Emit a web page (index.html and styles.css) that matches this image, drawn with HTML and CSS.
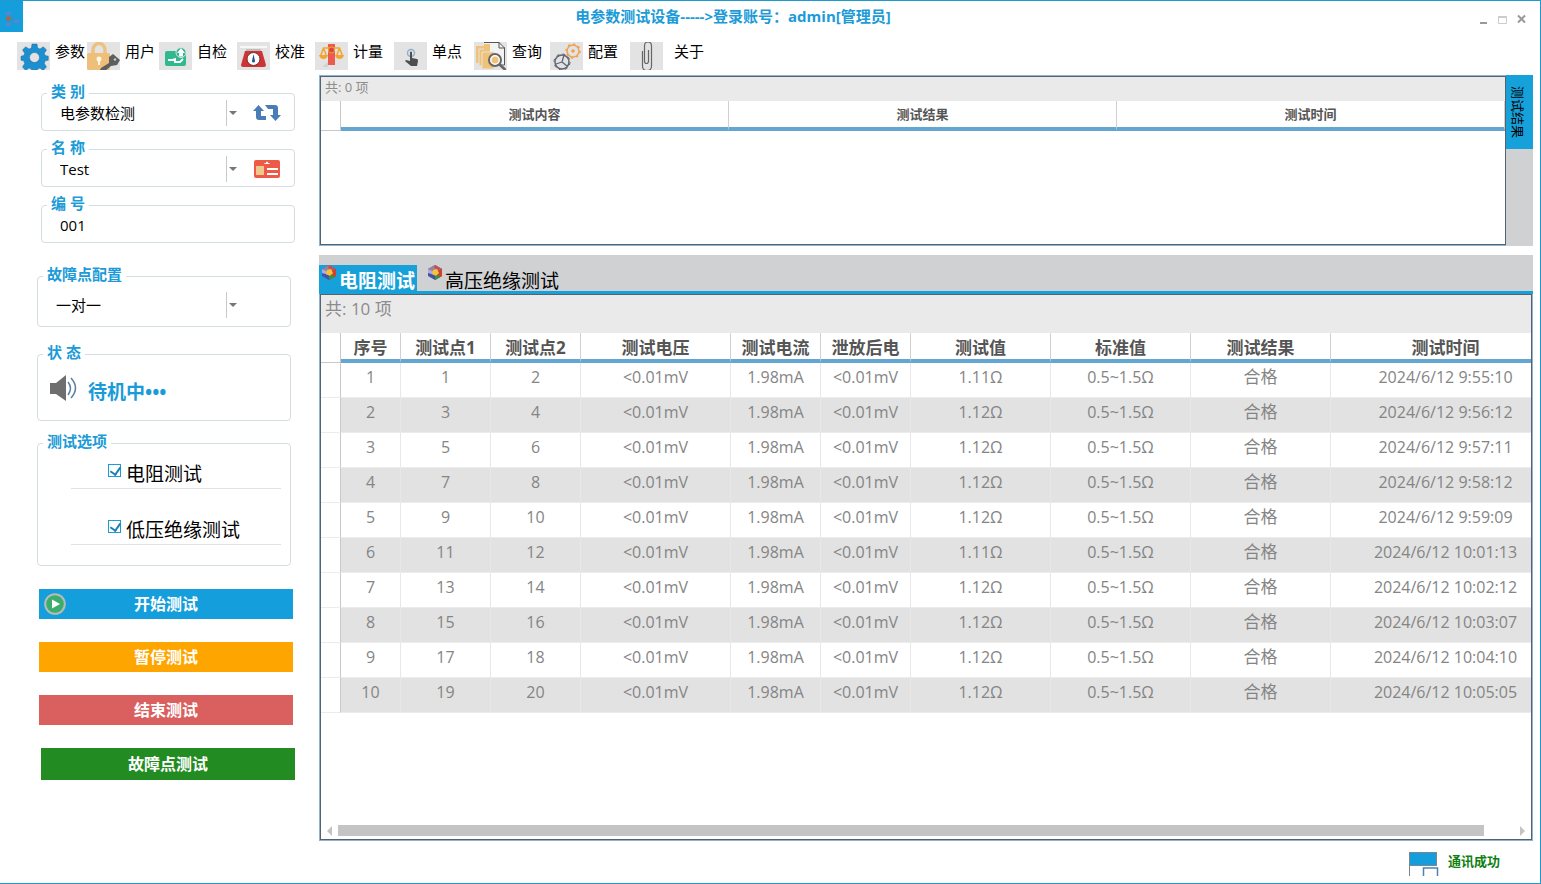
FILE: index.html
```html
<!DOCTYPE html>
<html lang="zh-CN">
<head>
    <meta charset="UTF-8">
    <meta name="viewport" content="width=device-width, initial-scale=1.0">
    <title>电参数测试设备</title>
    <link rel="stylesheet" href="styles.css">
</head>
<body>
    <svg width="0" height="0" class="defs" aria-hidden="true">
        <symbol id="cube" viewBox="0 0 14 15">
            <path d="M7 0L14 4V11L7 15 0 11V4z" fill="#4450b0"/>
            <path d="M7 0L14 4 7 7 0 4z" fill="#9c8296"/>
            <path d="M7 0L14 4 10 5 6 3z" fill="#c2505a"/>
            <path d="M0 4L7 7V10L0 8z" fill="#b4aadc"/>
            <path d="M7 7L14 4V11L7 15z" fill="#d2402c"/>
            <path d="M5 5L9 4 11 8 8 11 4 9z" fill="#f4c436"/>
            <path d="M7 11L11 10 12 12 7 15z" fill="#2c9a3c"/>
        </symbol>
    </svg>

    <div class="window">
        <header class="titlebar">
            <div class="logo">
                <svg width="23" height="32" viewBox="0 0 23 32">
                    <path d="M8 15V23M9 17h5v3" stroke="#5b7fc0" fill="none"/>
                    <rect x="6" y="11" width="5" height="3" fill="#5a86cf"/>
                    <rect x="6" y="22" width="5" height="3" fill="#5a86cf"/>
                    <rect x="14" y="19" width="5" height="3" fill="#5a86cf"/>
                    <path d="M6 16h5v2l-2 2-3-1z" fill="#b5643c"/>
                </svg>
            </div>
            <h1>电参数测试设备-----&gt;登录账号：admin[管理员]</h1>
            <div class="window-buttons">
                <button type="button" aria-label="最小化"><svg width="9" height="10" viewBox="0 0 9 10"><path d="M1 9h7" stroke="#999" stroke-width="2"/></svg></button>
                <button type="button" aria-label="最大化"><svg width="9" height="10" viewBox="0 0 9 10"><path d="M.5 9.500V3h8v6.500z" fill="none" stroke="#ccc"/><path d="M0 3h9" stroke="#ccc" stroke-width="2"/></svg></button>
                <button type="button" aria-label="关闭"><svg width="9" height="10" viewBox="0 0 9 10"><path d="M1 1.500l7 7M8 1.500l-7 7" stroke="#999" stroke-width="2"/></svg></button>
            </div>
        </header>

        <nav class="toolbar">
            <button type="button">
                <svg width="33" height="28" viewBox="0 0 33 28">
                    <path d="M15 2h5l.6 4 2.400 1L26.300 4.800 29.500 8l-2.200 3.200 1 2.400 3 .6v4l-3 .6-1 2.600L29.500 25l-3.500 3.500-3-2.500-2.400 1-.6 4h-5l-.6-4-2.400-1-3.300 2.500L5.500 25l2.200-3.600-1-2.600L4 18.200v-4l2.700-.6 1-2.400L5.500 8 8.700 4.800 12 7l2.400-1z" fill="#1c8fd0" stroke="#2b6d9c" stroke-width=".5"/>
                    <circle cx="17.500" cy="15.500" r="5" fill="#e3e3e3" stroke="#2b6d9c" stroke-width=".6"/>
                </svg>
                参数
            </button>
            <button type="button">
                <svg width="33" height="28" viewBox="0 0 33 28">
                    <path d="M6 12V8a5.500 6 0 0 1 12 0v4" fill="none" stroke="#edc27e" stroke-width="3.500"/>
                    <rect x="0" y="11" width="23" height="17" rx="2" fill="#edbf78"/>
                    <circle cx="12" cy="17" r="2.500" fill="#fff6e6"/>
                    <path d="M12 17v6" stroke="#fff6e6" stroke-width="2"/>
                    <path d="M22 15l4-3 7 6-3 5-6 1-6 5-5-1 1-2 8-5z" fill="#5e5e5e"/>
                    <circle cx="28" cy="17.500" r="1.200" fill="#ccc"/>
                </svg>
                用户
            </button>
            <button type="button">
                <svg width="33" height="28" viewBox="0 0 33 28">
                    <rect x="6" y="9" width="21" height="15" rx="2" fill="#2fb98d"/>
                    <circle cx="22" cy="10.500" r="5" fill="#2fb98d" stroke="#e3e3e3"/>
                    <path d="M22 6l4 5h-2v3.500h-4V11h-2z" fill="#fff"/>
                    <path d="M9 18h4l3-1v3h5l3-3" fill="none" stroke="#fff" stroke-width="1.800"/>
                </svg>
                自检
            </button>
            <button type="button">
                <svg width="33" height="28" viewBox="0 0 33 28">
                    <path d="M8 9h17l4 14q0 2-2 2H6q-2 0-2-2z" fill="#cc3436"/>
                    <path d="M3 4h27v2H3z" fill="#f8f8f8"/>
                    <path d="M9 8h15" stroke="#999"/>
                    <circle cx="16.500" cy="17" r="6.500" fill="#fff" stroke="#7e2526"/>
                    <path d="M16.500 12l1.500 7a1.500 1.500 0 1 1-3 0z" fill="#26528c"/>
                </svg>
                校准
            </button>
            <button type="button">
                <svg width="33" height="28" viewBox="0 0 33 28">
                    <path d="M7 25l6-5v5z" fill="#d2d2d2"/>
                    <rect x="13" y="2" width="7" height="21" fill="#ed5b50"/>
                    <path d="M8 6h17M8.500 6l-3 8M8.500 6l3 8M24.500 6l-3 8M24.500 6l3 8" stroke="#f4a62c" stroke-width="1.500" fill="none"/>
                    <path d="M4 13h9q-1 4-4.500 4T4 13zM20 13h9q-1 4-4.500 4T20 13z" fill="#f4a62c"/>
                    <circle cx="16.500" cy="8" r="3" fill="#d7463c" stroke="#f4a62c"/>
                </svg>
                计量
            </button>
            <button type="button">
                <svg width="33" height="28" viewBox="0 0 33 28">
                    <circle cx="17" cy="11" r="3.500" fill="none" stroke="#8fafd0" stroke-width="1.500"/>
                    <path d="M16 10q1-1 2 0v6l5 1q1 0 1 2l-1 5h-6l-6-5 1-1 4 1z" fill="#4d4d4d"/>
                </svg>
                单点
            </button>
            <button type="button">
                <svg width="33" height="28" viewBox="0 0 33 28">
                    <path d="M2 4h13v17H2z" fill="#efc277"/>
                    <path d="M5 7h13v17H5z" fill="#efc277" stroke="#e3e3e3"/>
                    <path d="M10 .5h15l5.500 5.500v17h-7" fill="#f3f3f3" stroke="#555"/>
                    <path d="M8 10h12v17H8z" fill="#efc277" stroke="#e3e3e3"/>
                    <path d="M10 2h6v7h-6z" fill="#efc277"/>
                    <path d="M25 0v6h6" fill="none" stroke="#555"/>
                    <circle cx="21" cy="18" r="6" fill="#fff" stroke="#666" stroke-width="2"/>
                    <circle cx="21" cy="18" r="3.500" fill="#efc277"/>
                    <path d="M25.500 22.500l6 5.500" stroke="#666" stroke-width="2.500"/>
                </svg>
                查询
            </button>
            <button type="button">
                <svg width="33" height="28" viewBox="0 0 33 28">
                    <circle cx="23" cy="9" r="6" fill="none" stroke="#f0a24e" stroke-width="1.500"/>
                    <circle cx="23" cy="9" r="7" fill="none" stroke="#f0a24e" stroke-width="1.500" stroke-dasharray="2 3.500"/>
                    <circle cx="23" cy="9" r="1.800" fill="#f0a24e"/>
                    <circle cx="12" cy="20" r="7" fill="none" stroke="#5f6773" stroke-width="1.500"/>
                    <path d="M12 20l2-7M12 20l-6 2M12 20l5 4" stroke="#5f6773" stroke-width="1.300"/>
                    <circle cx="12" cy="20" r="8" fill="none" stroke="#5f6773" stroke-dasharray="3 3.300"/>
                </svg>
                配置
            </button>
            <button type="button" class="about">
                <svg width="33" height="28" viewBox="0 0 33 28">
                    <path d="M12.500 9v15q0 4.500 4.500 4.500t4.500-4.500V4q0-4-3.500-4t-3.500 4v15q0 2.500 2 2.500t2-2.500V8" fill="none" stroke="#666" stroke-width="1.200"/>
                </svg>
                关于
            </button>
        </nav>

        <div class="content">
            <aside class="sidebar">
                <div class="params">
                    <fieldset>
                        <legend>类 别</legend>
                        <div class="field">
                            <div class="select">
                                <select aria-label="类别"><option>电参数检测</option></select>
                            </div>
                            <button type="button" aria-label="刷新">
                                <svg width="28" height="18" viewBox="0 0 28 18">
                                    <path d="M0 7l5.500-6L11 7H8v5h5v4H6q-3 0-3-3V7zM28 11l-5.500 6L17 11h3V5h-5l-3-4h10q3 0 3 3v7z" fill="#4a7db5"/>
                                </svg>
                            </button>
                        </div>
                    </fieldset>
                    <fieldset>
                        <legend>名 称</legend>
                        <div class="field">
                            <div class="select">
                                <select aria-label="名称"><option>Test</option></select>
                            </div>
                            <button type="button" aria-label="名称信息">
                                <svg width="28" height="18" viewBox="0 0 28 18">
                                    <rect x="1" width="26" height="18" rx="2" fill="#ee5a48"/>
                                    <rect x="3" y="6" width="8" height="9" fill="#efc98c"/>
                                    <path d="M11 4q0-1 2-1 0-1.500 1-1.500T15 3q2 0 2 1zM14 8h11v2H14zM14 13h11v2H14z" fill="#fff"/>
                                </svg>
                            </button>
                        </div>
                    </fieldset>
                    <fieldset>
                        <legend>编 号</legend>
                        <div class="field">
                            <input type="text" value="001" aria-label="编号">
                        </div>
                    </fieldset>
                </div>

                <div class="state">
                    <fieldset class="fault">
                        <legend>故障点配置</legend>
                        <div class="field">
                            <div class="select">
                                <select aria-label="故障点配置"><option>一对一</option></select>
                            </div>
                        </div>
                    </fieldset>
                    <fieldset class="status">
                        <legend>状 态</legend>
                        <div class="status-row">
                            <svg width="28" height="28" viewBox="0 0 28 28">
                                <path d="M0 8h6l10-8v26L6 19H0z" fill="#6e6e6e"/>
                                <path d="M18 7q5 6 0 13M21 3q9 10 0 20" fill="none" stroke="#5a7fa6" stroke-width="1.500"/>
                            </svg>
                            <strong>待机中•••</strong>
                        </div>
                    </fieldset>
                    <fieldset class="options">
                        <legend>测试选项</legend>
                        <label><input type="checkbox" checked>电阻测试</label>
                        <label><input type="checkbox" checked>低压绝缘测试</label>
                    </fieldset>
                </div>

                <div class="actions">
                    <button type="button" class="start">
                        <svg width="22" height="22" viewBox="0 0 22 22">
                            <circle cx="11" cy="11" r="9.800" fill="#3cad6c" stroke="#b5bcb8" stroke-width="2"/>
                            <path d="M8 6.500v9l8-4.500z" fill="#fff"/>
                        </svg>
                        开始测试
                    </button>
                    <button type="button" class="pause">暂停测试</button>
                    <button type="button" class="stop">结束测试</button>
                    <button type="button" class="fault-test">故障点测试</button>
                </div>
            </aside>

            <main>
                <section class="summary">
                    <div class="frame">
                        <div class="panel">
                            <div class="count">共: 0 项</div>
                            <table>
                                <thead>
                                    <tr><th class="row-head"></th><th>测试内容</th><th>测试结果</th><th>测试时间</th></tr>
                                </thead>
                            </table>
                        </div>
                    </div>
                    <div class="side-tabs">
                        <button type="button">测试结果</button>
                    </div>
                </section>

                <section class="results">
                    <div class="tabs">
                        <button type="button" class="active"><svg width="14" height="15"><use href="#cube"/></svg>电阻测试</button>
                        <button type="button"><svg width="14" height="15"><use href="#cube"/></svg>高压绝缘测试</button>
                    </div>
                    <div class="frame">
                        <div class="panel">
                            <div class="count">共: 10 项</div>
                            <div class="table-wrap">
                                <table>
                                    <colgroup>
                                        <col class="w20"><col class="w60"><col class="w90"><col class="w90"><col class="w150"><col class="w90"><col class="w90"><col class="w140"><col class="w140"><col class="w140"><col class="w230">
                                    </colgroup>
                                    <thead>
                                        <tr><th class="row-head"></th><th>序号</th><th>测试点1</th><th>测试点2</th><th>测试电压</th><th>测试电流</th><th>泄放后电</th><th>测试值</th><th>标准值</th><th>测试结果</th><th>测试时间</th></tr>
                                    </thead>
                                    <tbody>
                                        <tr><td class="row-head"></td><td>1</td><td>1</td><td>2</td><td>&lt;0.01mV</td><td>1.98mA</td><td>&lt;0.01mV</td><td>1.11Ω</td><td>0.5~1.5Ω</td><td class="verdict">合格</td><td>2024/6/12 9:55:10</td></tr>
                                        <tr><td class="row-head"></td><td>2</td><td>3</td><td>4</td><td>&lt;0.01mV</td><td>1.98mA</td><td>&lt;0.01mV</td><td>1.12Ω</td><td>0.5~1.5Ω</td><td class="verdict">合格</td><td>2024/6/12 9:56:12</td></tr>
                                        <tr><td class="row-head"></td><td>3</td><td>5</td><td>6</td><td>&lt;0.01mV</td><td>1.98mA</td><td>&lt;0.01mV</td><td>1.12Ω</td><td>0.5~1.5Ω</td><td class="verdict">合格</td><td>2024/6/12 9:57:11</td></tr>
                                        <tr><td class="row-head"></td><td>4</td><td>7</td><td>8</td><td>&lt;0.01mV</td><td>1.98mA</td><td>&lt;0.01mV</td><td>1.12Ω</td><td>0.5~1.5Ω</td><td class="verdict">合格</td><td>2024/6/12 9:58:12</td></tr>
                                        <tr><td class="row-head"></td><td>5</td><td>9</td><td>10</td><td>&lt;0.01mV</td><td>1.98mA</td><td>&lt;0.01mV</td><td>1.12Ω</td><td>0.5~1.5Ω</td><td class="verdict">合格</td><td>2024/6/12 9:59:09</td></tr>
                                        <tr><td class="row-head"></td><td>6</td><td>11</td><td>12</td><td>&lt;0.01mV</td><td>1.98mA</td><td>&lt;0.01mV</td><td>1.11Ω</td><td>0.5~1.5Ω</td><td class="verdict">合格</td><td>2024/6/12 10:01:13</td></tr>
                                        <tr><td class="row-head"></td><td>7</td><td>13</td><td>14</td><td>&lt;0.01mV</td><td>1.98mA</td><td>&lt;0.01mV</td><td>1.12Ω</td><td>0.5~1.5Ω</td><td class="verdict">合格</td><td>2024/6/12 10:02:12</td></tr>
                                        <tr><td class="row-head"></td><td>8</td><td>15</td><td>16</td><td>&lt;0.01mV</td><td>1.98mA</td><td>&lt;0.01mV</td><td>1.12Ω</td><td>0.5~1.5Ω</td><td class="verdict">合格</td><td>2024/6/12 10:03:07</td></tr>
                                        <tr><td class="row-head"></td><td>9</td><td>17</td><td>18</td><td>&lt;0.01mV</td><td>1.98mA</td><td>&lt;0.01mV</td><td>1.12Ω</td><td>0.5~1.5Ω</td><td class="verdict">合格</td><td>2024/6/12 10:04:10</td></tr>
                                        <tr><td class="row-head"></td><td>10</td><td>19</td><td>20</td><td>&lt;0.01mV</td><td>1.98mA</td><td>&lt;0.01mV</td><td>1.12Ω</td><td>0.5~1.5Ω</td><td class="verdict">合格</td><td>2024/6/12 10:05:05</td></tr>
                                    </tbody>
                                </table>
                            </div>
                            <div class="scrollbar">
                                <button type="button" aria-label="向左"><svg width="5" height="10" viewBox="0 0 5 10"><path d="M5 0v10L0 5z" fill="#c4c4c4"/></svg></button>
                                <div class="track"><div class="thumb"></div></div>
                                <button type="button" aria-label="向右"><svg width="5" height="10" viewBox="0 0 5 10"><path d="M0 0v10l5-5z" fill="#c4c4c4"/></svg></button>
                            </div>
                        </div>
                    </div>
                </section>
            </main>
        </div>

        <footer>
            <svg width="30" height="24" viewBox="0 0 30 24">
                <rect x=".5" y=".5" width="27" height="13" fill="#149edc" stroke="#7a8790"/>
                <path d="M.5 13v11" stroke="#7a8790"/>
                <path d="M14.500 24v-8h14v8" fill="#fff" stroke="#4f83ae" stroke-width="1.500"/>
            </svg>
            <span>通讯成功</span>
        </footer>
    </div>
</body>
</html>
```
FILE: styles.css
```css
* {
    box-sizing: border-box;
}
body {
    margin: 0;
    font-family: "Open Sans", "Noto Sans CJK SC", sans-serif;
    font-size: 15px;
    line-height: 20px;
    color: #000;
    background-color: #fff;
}
button, input, select {
    font: inherit;
    color: inherit;
    margin: 0;
    padding: 0;
    border: none;
    background: none;
}
button {
    cursor: pointer;
}
svg {
    display: block;
    flex: none;
}
.defs {
    position: absolute;
}
.window {
    display: flex;
    flex-direction: column;
    min-height: 100vh;
    border: 1px solid #1b9bd0;
    border-left: none;
}

/* title bar */
.titlebar {
    display: grid;
    grid-template-columns: 1fr auto 1fr;
    height: 36px;
    padding-right: 14px;
}
.logo {
    width: 23px;
    height: 31px;
    background-color: #149edc;
}
.titlebar h1 {
    margin: 0;
    padding: 6px 60px 0 0;
    font-size: 15px;
    line-height: 18px;
    color: #1b9bd7;
}
.window-buttons {
    display: flex;
    justify-content: flex-end;
    align-items: flex-start;
    gap: 10px;
    padding-top: 13px;
}

/* toolbar */
.toolbar {
    display: grid;
    grid-template-columns: 70px 72px 78px 78px 79px 80px 76px 80px auto;
    justify-content: start;
    height: 38px;
    padding: 5px 0 0 17px;
    line-height: 18px;
}
.toolbar button {
    display: flex;
    align-items: flex-start;
    gap: 5px;
    white-space: nowrap;
}
.toolbar .about {
    gap: 11px;
}
.toolbar svg {
    background-color: #e3e3e3;
}

.content {
    display: flex;
    flex: 1;
}

/* sidebar */
.sidebar {
    flex: none;
    width: 319px;
}
.params {
    display: flex;
    flex-direction: column;
    gap: 9px;
    padding: 9px 24px 0 41px;
}
.state {
    display: flex;
    flex-direction: column;
    gap: 13px;
    padding: 24px 28px 0 37px;
}
fieldset {
    min-width: 0;
    height: 47px;
    margin: 0;
    padding: 0;
    border: 1px solid #d3dde2;
    border-radius: 4px;
}
legend {
    margin-left: 5px;
    padding: 0 4px 4px;
    font-weight: bold;
    line-height: 14px;
    color: #1b9bd7;
}
.field {
    display: flex;
    align-items: center;
    height: 22px;
    padding-left: 18px;
    gap: 11px;
}
.field input {
    width: 200px;
    height: 22px;
}
.select {
    position: relative;
    width: 182px;
    height: 26px;
}
.select select {
    width: 100%;
    height: 26px;
    appearance: none;
}
.select::before {
    content: "";
    position: absolute;
    right: 15px;
    width: 1px;
    height: 26px;
    background-color: #c8c8c8;
}
.select::after {
    content: "";
    position: absolute;
    top: 11px;
    right: 5px;
    border: 4px solid transparent;
    border-top-color: #777;
    border-bottom: none;
    pointer-events: none;
}
.fault {
    height: 60px;
}
.fault .field {
    height: 40px;
}
.fault .select {
    width: 186px;
}
.status {
    height: 76px;
    margin-top: 5px;
}
.status-row {
    display: flex;
    gap: 10px;
    padding: 12px;
}
.status-row strong {
    padding-top: 6px;
    font-size: 19px;
    line-height: 22px;
    color: #1b9bd7;
}
.options {
    height: 132px;
}
.options label {
    display: flex;
    align-items: center;
    gap: 5px;
    height: 37px;
    margin: 0 9px 19px 33px;
    padding: 7px 0 0 37px;
    border-bottom: 1px solid #dfe3e5;
    font-size: 19px;
    line-height: 28px;
}
.options input {
    appearance: none;
    flex: none;
    width: 13px;
    height: 13px;
    margin-bottom: 6px;
    border: 1px solid #1b9bd7;
}
.options input:checked::before {
    content: "";
    display: block;
    width: 5px;
    height: 8px;
    margin: 0 0 0 3px;
    border: solid #1b7fb5;
    border-width: 0 2px 2px 0;
    transform: rotate(35deg);
}
.actions {
    display: flex;
    flex-direction: column;
    gap: 23px;
    padding: 23px 26px 0 39px;
}
.actions button {
    position: relative;
    height: 30px;
    font-size: 16px;
    font-weight: bold;
    color: #fff;
}
.actions svg {
    position: absolute;
    top: 4px;
    left: 5px;
}
.start {
    background-color: #149edc;
}
.pause {
    background-color: #ffa500;
}
.stop {
    background-color: #da5f5f;
}
.actions .fault-test {
    height: 32px;
    margin: 0 -2px 0 2px;
    background-color: #228b22;
}

/* tables */
main {
    display: flex;
    flex: 1;
    flex-direction: column;
    gap: 9px;
    min-width: 0;
    padding-right: 7px;
}
.frame {
    display: flex;
    flex: 1;
    min-width: 0;
    border: 1px solid #8fb4d0;
}
.panel {
    display: flex;
    flex: 1;
    flex-direction: column;
    min-width: 0;
    border: 1px solid #56636f;
}
.count {
    padding: 0 4px;
    color: #8c8c8c;
    background-color: #eaeaea;
}
table {
    width: 100%;
    table-layout: fixed;
    border-spacing: 0;
}
th, td {
    padding: 0;
    border-right: 1px solid #e8e8e8;
    text-align: center;
    white-space: nowrap;
}
th {
    height: 30px;
    border-right-color: #d0d0d0;
    border-bottom: 4px solid #62a6d1;
    color: #555;
}
th.row-head, td.row-head {
    width: 20px;
    border-right: 1px solid #c8c8c8;
    border-bottom: 1px solid #c8c8c8;
    background-color: #fff;
}
.summary {
    display: flex;
    height: 171px;
}
.summary .frame {
    border-right: none;
}
.summary .count {
    height: 24px;
    font-size: 13px;
}
.summary table {
    font-size: 13px;
}
.side-tabs {
    width: 27px;
    background-color: #d0d1d3;
}
.side-tabs button {
    width: 27px;
    height: 74px;
    padding-right: 4px;
    font-size: 13px;
    writing-mode: vertical-rl;
    text-orientation: sideways;
    background-color: #17a1da;
}
.results {
    display: flex;
    flex: 1;
    flex-direction: column;
}
.tabs {
    display: flex;
    gap: 8px;
    height: 39px;
    padding-top: 10px;
    border-bottom: 3px solid #17a1da;
    background-color: #d0d1d3;
}
.tabs button {
    display: flex;
    gap: 3px;
    padding: 2px 2px 0 3px;
    font-size: 19px;
    line-height: 28px;
}
.tabs svg {
    margin-top: -2px;
}
.tabs .active {
    font-weight: bold;
    color: #fff;
    background-color: #17a1da;
}
.results .frame {
    border-top: none;
}
.results .count {
    height: 38px;
    font-size: 17px;
    line-height: 28px;
}
.table-wrap {
    flex: 1;
    overflow: hidden;
}
.results table {
    width: 1240px;
    line-height: 20px;
}
.results th {
    padding-top: 4px;
    font-size: 17px;
}
.results td {
    height: 35px;
    padding-bottom: 6px;
    border-bottom: 1px solid #ececec;
    font-size: 16px;
    color: #858585;
}
.results .verdict {
    font-size: 17px;
}
.results tbody tr:nth-child(even) {
    background-color: #e2e2e2;
}
.w20 { width: 20px; }
.w60 { width: 60px; }
.w90 { width: 90px; }
.w140 { width: 140px; }
.w150 { width: 150px; }
.w230 { width: 230px; }
.scrollbar {
    display: flex;
    align-items: center;
    gap: 6px;
    height: 15px;
    padding: 0 6px 2px;
}
.track {
    flex: 1;
    padding-right: 30px;
}
.thumb {
    height: 11px;
    background-color: #c4c4c4;
}

footer {
    display: flex;
    gap: 9px;
    justify-content: flex-end;
    height: 42px;
    padding: 11px 40px 0 0;
    font-size: 13px;
    font-weight: bold;
    line-height: 18px;
    color: #108010;
}
```
